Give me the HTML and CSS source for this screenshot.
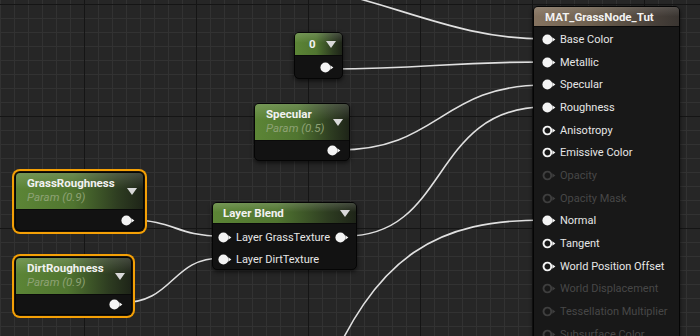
FILE: index.html
```html
<!DOCTYPE html>
<html lang="en">

<head>
    <meta charset="UTF-8">
    <title>MAT_GrassNode_Tut</title>
    <link rel="stylesheet" href="styles.css">
</head>

<body>
    <svg class="defs" width="0" height="0">
        <symbol id="pin-on" viewBox="0 0 13 10">
            <circle cx="5" cy="5" r="4.6" fill="currentColor" />
            <path d="M9.6 3 L12.4 5 L9.6 7 Z" fill="currentColor" />
        </symbol>
        <symbol id="pin-off" viewBox="0 0 13 10">
            <circle cx="5" cy="5" r="3.6" fill="none" stroke="currentColor" stroke-width="1.8" />
            <path d="M9.6 3 L12.4 5 L9.6 7 Z" fill="currentColor" />
        </symbol>
    </svg>

    <div id="graph">
        <!-- cables, drawn under the nodes -->
        <svg class="wires" width="700" height="336">
            <path d="M150 -30 C 360 -30, 420 39, 545 39" />
            <path d="M330 69 C 430 69, 440 62, 545 62" />
            <path d="M338 150 C 440 150, 440 85, 545 85" />
            <path d="M346 236 C 450 236, 430 107, 545 107" />
            <path d="M320 390 C 375 250, 440 220, 545 220" />
            <path d="M130 220 C 175 220, 175 236, 222 236" />
            <path d="M120 303 C 175 303, 170 258, 222 258" />
        </svg>

        <div class="node n-zero">
            <div class="hdr green"><span class="title">0</span><i class="drop"></i></div>
            <div class="out"><svg class="pin"><use href="#pin-on" /></svg></div>
        </div>

        <div class="node n-spec">
            <div class="hdr green">
                <span class="title">Specular</span>
                <span class="param">Param (0.5)</span>
                <i class="drop"></i>
            </div>
            <div class="out"><svg class="pin"><use href="#pin-on" /></svg></div>
        </div>

        <div class="node selected n-grass">
            <div class="hdr green">
                <span class="title">GrassRoughness</span>
                <span class="param">Param (0.9)</span>
                <i class="drop"></i>
            </div>
            <div class="out"><svg class="pin"><use href="#pin-on" /></svg></div>
        </div>

        <div class="node selected n-dirt">
            <div class="hdr green">
                <span class="title">DirtRoughness</span>
                <span class="param">Param (0.9)</span>
                <i class="drop"></i>
            </div>
            <div class="out"><svg class="pin"><use href="#pin-on" /></svg></div>
        </div>

        <div class="node n-blend">
            <div class="hdr green"><span class="title">Layer Blend</span><i class="drop"></i></div>
            <div class="rows">
                <div class="row">
                    <svg class="pin"><use href="#pin-on" /></svg>
                    <span>Layer GrassTexture</span>
                    <svg class="pin right"><use href="#pin-on" /></svg>
                </div>
                <div class="row">
                    <svg class="pin"><use href="#pin-on" /></svg>
                    <span>Layer DirtTexture</span>
                </div>
            </div>
        </div>

        <div class="node n-mat">
            <div class="hdr brown"><span class="title">MAT_GrassNode_Tut</span></div>
            <div class="rows">
                <div class="row"><svg class="pin"><use href="#pin-on" /></svg><span>Base Color</span></div>
                <div class="row"><svg class="pin"><use href="#pin-on" /></svg><span>Metallic</span></div>
                <div class="row"><svg class="pin"><use href="#pin-on" /></svg><span>Specular</span></div>
                <div class="row"><svg class="pin"><use href="#pin-on" /></svg><span>Roughness</span></div>
                <div class="row"><svg class="pin"><use href="#pin-off" /></svg><span>Anisotropy</span></div>
                <div class="row"><svg class="pin"><use href="#pin-off" /></svg><span>Emissive Color</span></div>
                <div class="row dim"><svg class="pin"><use href="#pin-off" /></svg><span>Opacity</span></div>
                <div class="row dim"><svg class="pin"><use href="#pin-off" /></svg><span>Opacity Mask</span></div>
                <div class="row"><svg class="pin"><use href="#pin-on" /></svg><span>Normal</span></div>
                <div class="row"><svg class="pin"><use href="#pin-off" /></svg><span>Tangent</span></div>
                <div class="row"><svg class="pin"><use href="#pin-off" /></svg><span>World Position Offset</span></div>
                <div class="row dim"><svg class="pin"><use href="#pin-off" /></svg><span>World Displacement</span></div>
                <div class="row dim"><svg class="pin"><use href="#pin-off" /></svg><span>Tessellation Multiplier</span></div>
                <div class="row dim"><svg class="pin"><use href="#pin-off" /></svg><span>Subsurface Color</span></div>
            </div>
        </div>
    </div>
</body>

</html>
```

FILE: styles.css
```css
body {
    margin: 0;
    background-color: #262626;
    font-family: Roboto, 'Liberation Sans', sans-serif;
    color: #e6e6e6;
}

.defs {
    position: absolute;
}

#graph {
    position: relative;
    width: 700px;
    height: 336px;
    overflow: hidden;
    background-color: #262626;
    background-image:
        linear-gradient(to right, #151515 1px, transparent 1px),
        linear-gradient(to bottom, #151515 1px, transparent 1px),
        linear-gradient(to right, #323232 1px, transparent 1px),
        linear-gradient(to bottom, #323232 1px, transparent 1px);
    background-size: 112px 112px, 112px 112px, 14px 14px, 14px 14px;
    background-position: 84px 4px, 84px 4px, 0 4px, 0 4px;
}

.wires {
    position: absolute;
    left: 0;
    top: 0;
}

.wires path {
    fill: none;
    stroke: #e0e0e0;
    stroke-width: 1.6;
}

/* nodes */
.node {
    position: absolute;
    background-color: #121212;
    border: 1px solid #050505;
    border-radius: 5px;
    box-shadow: 0 2px 4px rgba(0, 0, 0, 0.6);
    display: flex;
    flex-direction: column;
}

.node.selected {
    box-shadow: 0 0 0 1px #1a1206, 0 0 0 3px #f4a006;
}

.hdr {
    position: relative;
    display: flex;
    flex-direction: column;
    padding: 3px 20px 5px 11px;
    border-radius: 4px 4px 0 0;
    border-bottom: 1px solid #0a0a0a;
    white-space: nowrap;
}

.hdr.green {
    background:
        linear-gradient(to bottom, rgba(255, 255, 255, 0.16), rgba(255, 255, 255, 0) 45%),
        linear-gradient(to right, #5c8536 0%, #507530 45%, #2e3d21 80%, #1e2418 100%);
}

.hdr.brown {
    background:
        linear-gradient(to bottom, rgba(255, 255, 255, 0.12), rgba(255, 255, 255, 0) 50%),
        linear-gradient(to right, #857360 0%, #6e604f 40%, #4a423b 80%, #3a3531 100%);
    padding: 3px 10px 2px 11px;
}

.title {
    font-size: 11.5px;
    font-weight: 700;
    line-height: 14px;
    color: #f2f2f2;
}

.param {
    font-size: 11.5px;
    font-style: italic;
    line-height: 14px;
    color: #8ea274;
}

.drop {
    position: absolute;
    right: 6px;
    top: 50%;
    margin-top: -3px;
    width: 0;
    height: 0;
    border-left: 5px solid transparent;
    border-right: 5px solid transparent;
    border-top: 7px solid #d9d9d9;
}

.pin {
    width: 14px;
    height: 11px;
    flex: none;
    color: #f4f4f4;
}

.out {
    flex: 1;
    display: flex;
    justify-content: flex-end;
    align-items: center;
    padding-right: 8px;
}

.rows {
    display: flex;
    flex-direction: column;
    padding-top: 2px;
}

.row {
    display: flex;
    align-items: center;
    gap: 4px;
    height: 22px;
    padding-left: 5px;
    font-size: 11px;
    color: #e6e6e6;
    white-space: nowrap;
}

.row .right {
    margin-left: auto;
    margin-right: 7px;
}

.row.dim {
    color: #474747;
}

.row.dim .pin {
    color: #3e3e3e;
}

/* where each node sits on the canvas */
.n-zero {
    left: 294px;
    top: 32px;
    width: 47px;
    height: 45px;
}

.n-zero .hdr {
    padding: 4px 24px 4px 14px;
}

.n-spec {
    left: 254px;
    top: 103px;
    width: 94px;
    height: 56px;
}

.n-grass {
    left: 15px;
    top: 172px;
    width: 127px;
    height: 57px;
}

.n-dirt {
    left: 15px;
    top: 257px;
    width: 115px;
    height: 56px;
}

.n-blend {
    left: 212px;
    top: 202px;
    width: 143px;
    height: 66px;
}

.n-blend .hdr {
    padding: 3px 26px 3px 10px;
}

.n-mat {
    left: 533px;
    top: 6px;
    width: 145px;
    height: 345px;
    background-color: #181818;
}

.n-mat .rows {
    padding-top: 1px;
}

.n-mat .row {
    height: 22.7px;
    padding-left: 8px;
}
```
